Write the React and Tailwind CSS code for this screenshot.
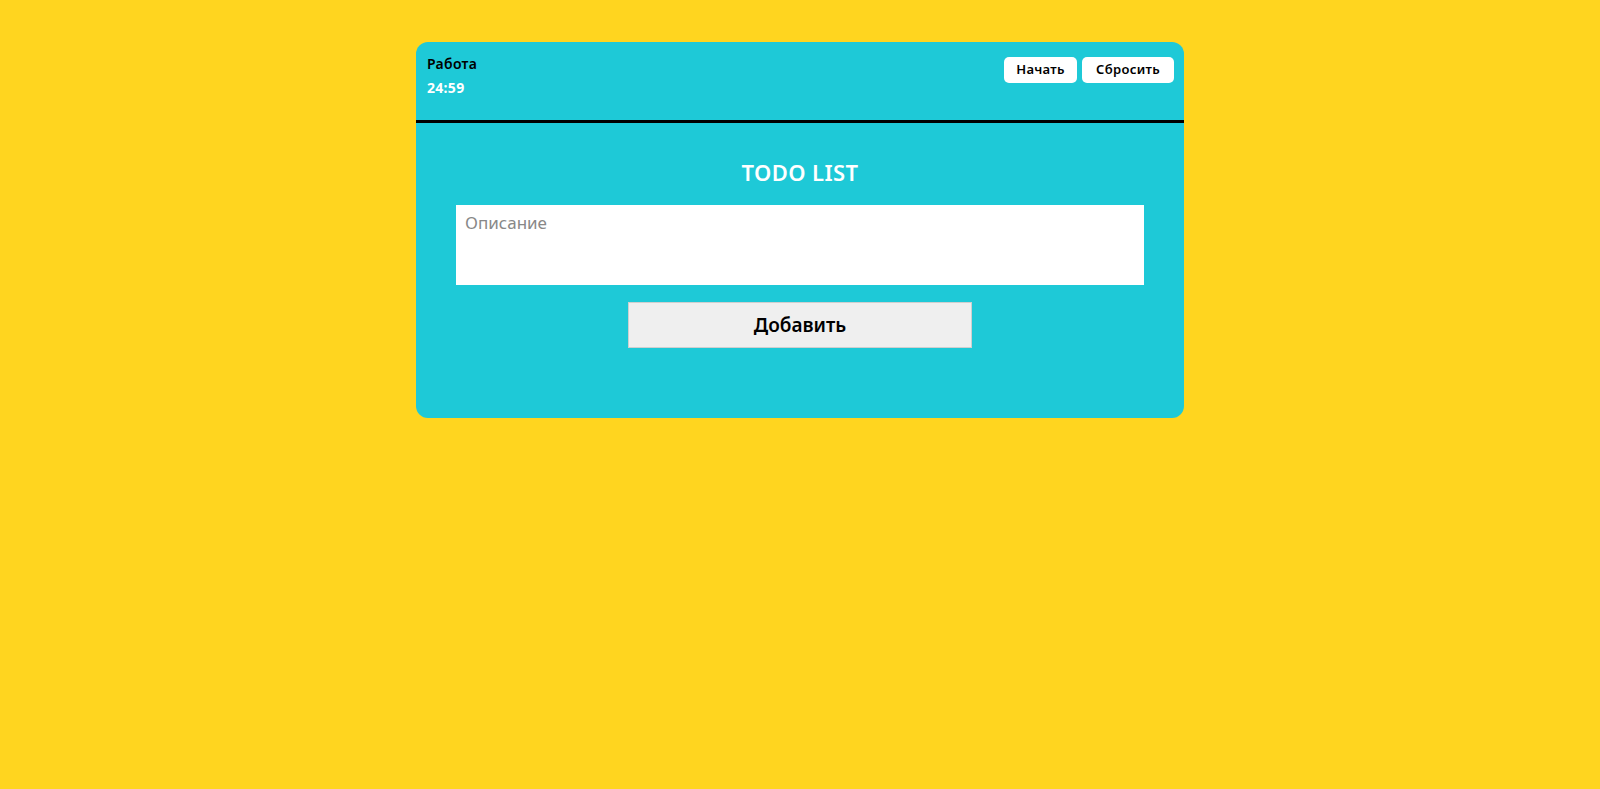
import React, { useState } from 'react';

const App = () => {
  const [text, setText] = useState('');

  return (
    <div className="min-h-screen bg-[#ffd51f] pt-[42px] font-['Noto_Sans',sans-serif]">
      <div className="mx-auto w-[768px] rounded-xl bg-[#1ec9d7] overflow-hidden">
        {/* Timer header */}
        <div className="flex h-[81px] justify-between border-b-[3px] border-black pl-[11px] pr-[10px] pt-[13px]">
          <div>
            <div className="text-[14px] font-semibold leading-[18px] tracking-[0.3px] text-black">Работа</div>
            <div className="mt-[6px] text-[14px] font-bold leading-[18px] tracking-[0.3px] text-white">24:59</div>
          </div>
          <div className="mt-[2px] flex h-[26px] gap-[5px]">
            <button className="w-[73px] rounded-[5px] bg-white text-[13px] font-semibold tracking-[0.3px] text-black">
              Начать
            </button>
            <button className="w-[92px] rounded-[5px] bg-white text-[13px] font-semibold tracking-[0.3px] text-black">
              Сбросить
            </button>
          </div>
        </div>

        {/* Todo */}
        <div className="flex flex-col items-center pb-[70px] pt-[35px]">
          <h1 className="text-[22px] font-semibold leading-[28px] tracking-[0.4px] text-white">TODO LIST</h1>
          <textarea
            value={text}
            onChange={(e) => setText(e.target.value)}
            placeholder="Описание"
            className="mt-[19px] h-[80px] w-[688px] resize-none bg-white px-[9px] py-[5px] text-[17px] text-black outline-none placeholder:text-[#888]"
          />
          <button className="mt-[17px] h-[46px] w-[344px] border border-[#cfcfcf] bg-[#efefef] text-[19px] font-semibold text-black">
            Добавить
          </button>
        </div>
      </div>
    </div>
  );
};

export default App;
